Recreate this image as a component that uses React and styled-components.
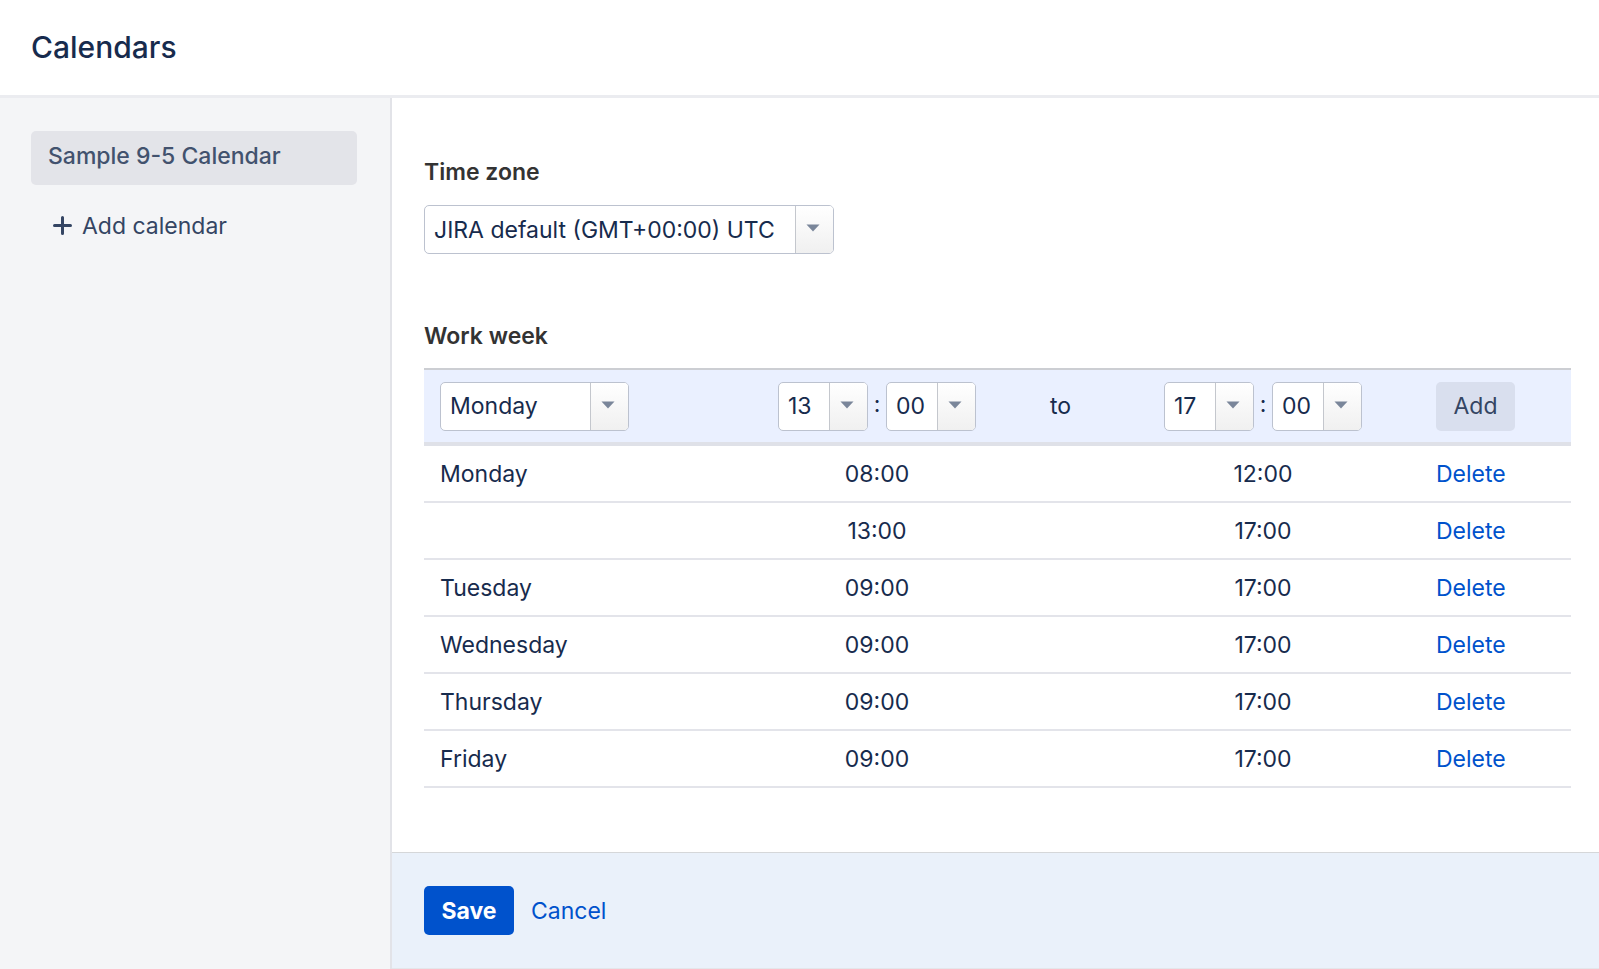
import React from "react";
import styled, { createGlobalStyle } from "styled-components";

const GlobalStyle = createGlobalStyle`
  *, *::before, *::after { box-sizing: border-box; }
  body { margin: 0; background: #fff; }
  body, button, select {
    font-family: Inter, "Liberation Sans", sans-serif;
    font-size: 23px;
    line-height: 28px;
    color: #172b4d;
  }
`;

const Page = styled.div`
  display: flex;
  flex-direction: column;
  min-height: 100vh;
`;

const Header = styled.header`
  padding: 27px 31px 28px;
  border-bottom: 3px solid #ebecf0;
`;

const Title = styled.h1`
  margin: 0;
  font-size: 30px;
  line-height: 40px;
  font-weight: 500;
`;

const Body = styled.div`
  display: flex;
  flex: 1;
`;

const Sidebar = styled.aside`
  flex: none;
  width: 392px;
  padding: 33px 33px 33px 31px;
  background: #f4f5f7;
  border-right: 2px solid #e2e3e8;
`;

const CalendarLink = styled.a`
  display: block;
  height: 54px;
  padding: 11px 17px;
  border-radius: 5px;
  background: #e3e4e9;
  color: #42526e;
  font-weight: 500;
  text-decoration: none;
`;

const AddCalendar = styled.button`
  display: flex;
  align-items: center;
  gap: 10px;
  margin-top: 27px;
  padding: 0 21px;
  border: 0;
  background: none;
  color: #344563;
  cursor: pointer;
`;

const Form = styled.form`
  display: flex;
  flex: 1;
  flex-direction: column;
  min-width: 0;
`;

const Fields = styled.div`
  flex: 1;
  padding: 60px 28px 60px 32px;
`;

const Label = styled.label`
  display: block;
  margin-bottom: 19px;
  font-weight: 600;
  color: #333;
`;

const SectionTitle = styled.h2`
  margin: 68px 0 18px;
  font-size: 23px;
  line-height: 28px;
  font-weight: 600;
  color: #333;
`;

const SelectBox = styled.span`
  display: inline-grid;
  grid-template-columns: minmax(0, 1fr) 38px;
  width: ${(p) => p.$width}px;
  height: 49px;
  border: 1px solid #bcc2cf;
  border-radius: 5px;
  background: #fff;
  overflow: hidden;
  vertical-align: top;
`;

const NativeSelect = styled.select`
  grid-area: 1 / 1 / 2 / 3;
  width: 100%;
  padding: 0 0 0 9px;
  border: 0;
  background: none;
  appearance: none;
`;

const ArrowPanel = styled.span`
  grid-area: 1 / 2;
  display: flex;
  align-items: center;
  justify-content: center;
  padding: 0 3px 3px 0;
  border-left: 1px solid #c4c7cd;
  background: linear-gradient(#fff, #f0f0f0);
  pointer-events: none;
`;

const WeekTable = styled.table`
  width: 100%;
  table-layout: fixed;
  border-spacing: 0;
  border-top: 2px solid #ccced3;
`;

const Column = styled.col`
  width: ${(p) => (p.$width ? `${p.$width}px` : "auto")};
`;

const Cell = styled.td`
  height: 57px;
  padding: 0 0 0 ${(p) => p.$indent || 0}px;
  border-bottom: 2px solid #e3e4ea;
  text-align: ${(p) => p.$align || "left"};
`;

const EntryCell = styled(Cell)`
  height: 76px;
  background: #eaf0ff;
  border-bottom: 4px solid #dfe1e8;
`;

const TimeGroup = styled.span`
  display: inline-flex;
  vertical-align: top;
`;

const Colon = styled.span`
  width: 18px;
  line-height: 44px;
  text-align: center;
`;

const Button = styled.button`
  height: 49px;
  padding: 0;
  width: ${(p) => (p.$primary ? 90 : 79)}px;
  border: 0;
  border-radius: 5px;
  background: ${(p) => (p.$primary ? "#0052cc" : "#d9dfee")};
  color: ${(p) => (p.$primary ? "#fff" : "#344563")};
  font-weight: ${(p) => (p.$primary ? 700 : 400)};
  vertical-align: top;
  cursor: pointer;
`;

const Link = styled.a`
  color: #0052cc;
  text-decoration: none;
`;

const Footer = styled.footer`
  display: flex;
  align-items: center;
  gap: 17px;
  padding: 33px 32px;
  background: #eaf1fa;
  border-top: 1px solid #d5d7d9;
  border-bottom: 1px solid #e4e6ea;
`;

const days = ["Monday", "Tuesday", "Wednesday", "Thursday", "Friday", "Saturday", "Sunday"];
const hours = Array.from({ length: 24 }, (_, i) => String(i).padStart(2, "0"));
const minutes = ["00", "15", "30", "45"];

const workWeek = [
  { day: "Monday", start: "08:00", end: "12:00" },
  { day: "", start: "13:00", end: "17:00" },
  { day: "Tuesday", start: "09:00", end: "17:00" },
  { day: "Wednesday", start: "09:00", end: "17:00" },
  { day: "Thursday", start: "09:00", end: "17:00" },
  { day: "Friday", start: "09:00", end: "17:00" },
];

function Select({ id, label, width, options, value }) {
  return (
    <SelectBox $width={width}>
      <NativeSelect id={id} aria-label={label} defaultValue={value}>
        {options.map((o) => (
          <option key={o}>{o}</option>
        ))}
      </NativeSelect>
      <ArrowPanel>
        <svg width="14" height="8" viewBox="0 0 14 8" aria-hidden="true">
          <path d="M0.5 0.5H13.5L7 7.5Z" fill="#7a869a" />
        </svg>
      </ArrowPanel>
    </SelectBox>
  );
}

function TimePicker({ name, hour }) {
  return (
    <TimeGroup>
      <Select label={`${name} hour`} width={90} options={hours} value={hour} />
      <Colon>:</Colon>
      <Select label={`${name} minute`} width={90} options={minutes} value="00" />
    </TimeGroup>
  );
}

export default function App() {
  return (
    <Page>
      <GlobalStyle />
      <Header>
        <Title>Calendars</Title>
      </Header>
      <Body>
        <Sidebar>
          <CalendarLink href="#sample">Sample 9-5 Calendar</CalendarLink>
          <AddCalendar type="button">
            <svg width="20" height="20" viewBox="0 0 20 20" aria-hidden="true">
              <path d="M10.5 1.5V17.5M2.5 9.5H18.5" stroke="#344563" strokeWidth="3" strokeLinecap="round" />
            </svg>
            Add calendar
          </AddCalendar>
        </Sidebar>
        <Form onSubmit={(e) => e.preventDefault()}>
          <Fields>
            <Label htmlFor="timezone">Time zone</Label>
            <Select
              id="timezone"
              width={410}
              options={["JIRA default (GMT+00:00) UTC"]}
              value="JIRA default (GMT+00:00) UTC"
            />
            <SectionTitle>Work week</SectionTitle>
            <WeekTable>
              <colgroup>
                <Column />
                <Column $width={218} />
                <Column $width={149} />
                <Column $width={256} />
                <Column $width={180} />
              </colgroup>
              <tbody>
                <tr>
                  <EntryCell $indent={16}>
                    <Select label="Day" width={189} options={days} value="Monday" />
                  </EntryCell>
                  <EntryCell $align="center">
                    <TimePicker name="Start" hour="13" />
                  </EntryCell>
                  <EntryCell $align="center">to</EntryCell>
                  <EntryCell $align="center">
                    <TimePicker name="End" hour="17" />
                  </EntryCell>
                  <EntryCell $indent={45}>
                    <Button type="button">Add</Button>
                  </EntryCell>
                </tr>
                {workWeek.map((row, i) => (
                  <tr key={i}>
                    <Cell $indent={16}>{row.day}</Cell>
                    <Cell $align="center">{row.start}</Cell>
                    <Cell />
                    <Cell $align="center">{row.end}</Cell>
                    <Cell $indent={45}>
                      <Link href="#delete">Delete</Link>
                    </Cell>
                  </tr>
                ))}
              </tbody>
            </WeekTable>
          </Fields>
          <Footer>
            <Button type="submit" $primary>
              Save
            </Button>
            <Link href="#cancel">Cancel</Link>
          </Footer>
        </Form>
      </Body>
    </Page>
  );
}
